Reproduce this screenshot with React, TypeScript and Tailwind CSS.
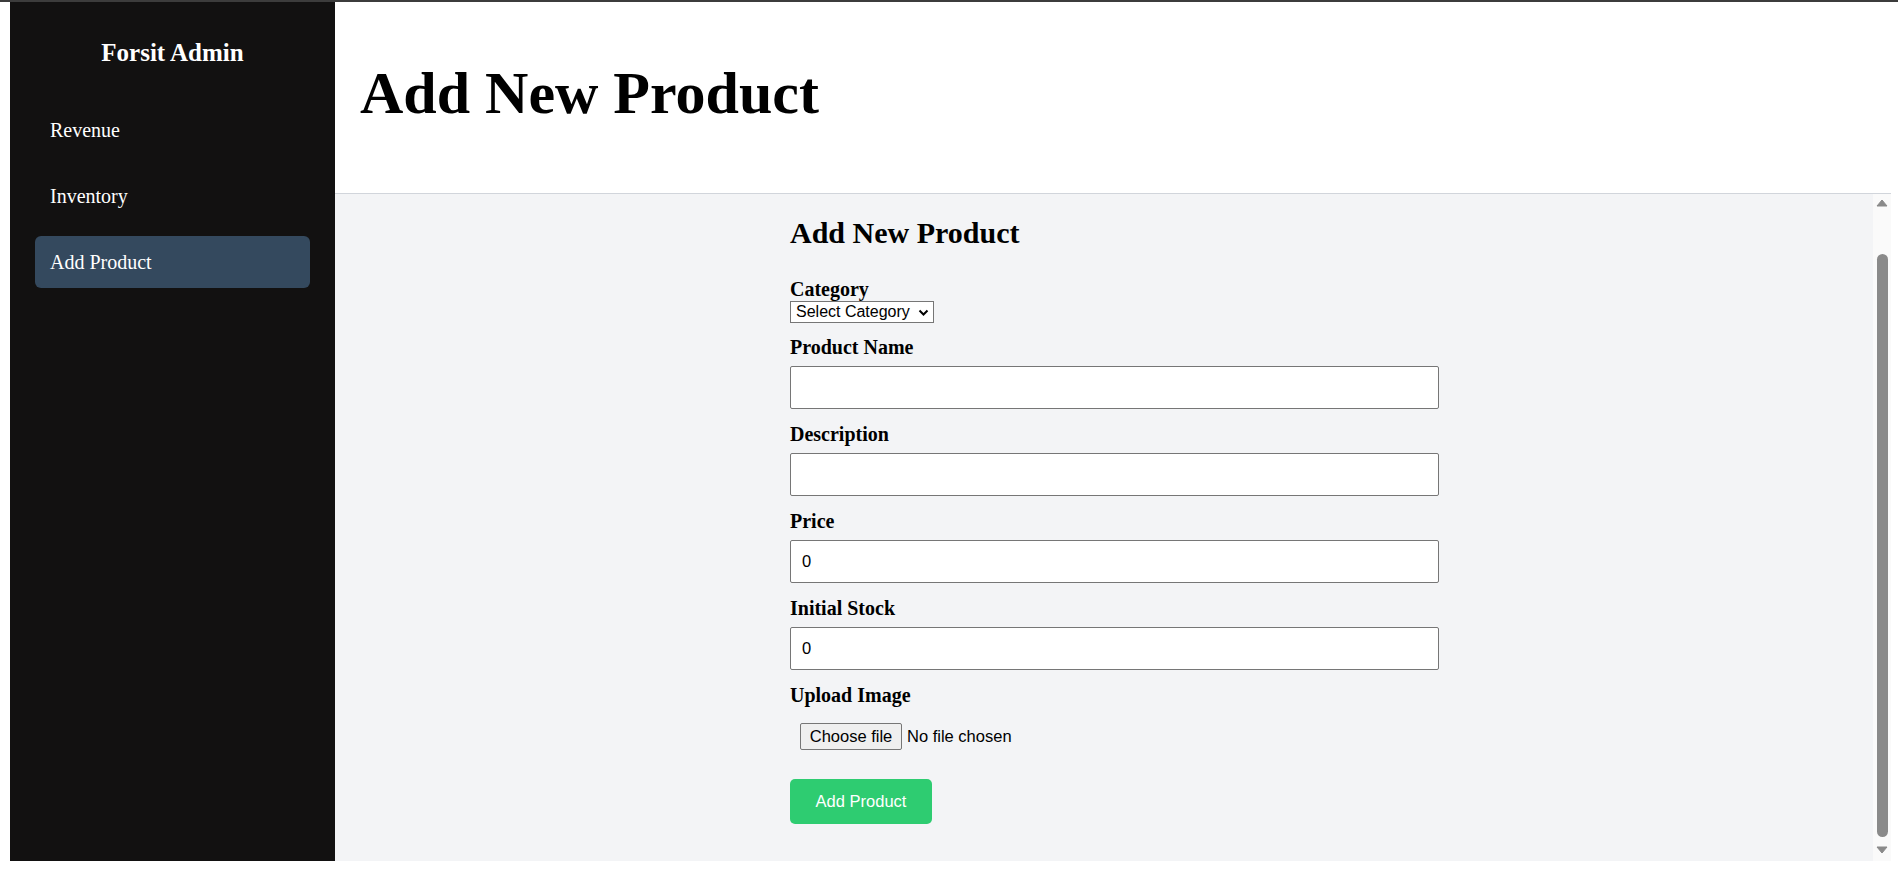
const navItems = ["Revenue", "Inventory", "Add Product"];

function Field({ label, value }: { label: string; value?: string }) {
  return (
    <div className="mb-[15px] flex flex-col">
      <label className="mb-[9px] text-[20px] font-bold leading-[20px]">{label}</label>
      <div className="flex h-[43px] w-[649px] items-center rounded-[2px] border border-[#767676] bg-white px-[11px] font-['Liberation_Sans',Arial,sans-serif] text-[16.5px] text-black">
        {value}
      </div>
    </div>
  );
}

function Scrollbar() {
  return (
    <div className="flex w-[18px] flex-col bg-[#fafafa]">
      <div className="flex h-[17px] items-center justify-center">
        <svg width="12" height="8" viewBox="0 0 12 8">
          <polygon points="6,1 11,7 1,7" fill="#8a8a8a" stroke="#8a8a8a" strokeLinejoin="round" />
        </svg>
      </div>
      <div className="flex flex-1 justify-center pt-[43px] pb-[7px]">
        <div className="h-full w-[11px] rounded-full bg-[#8a8a8a]" />
      </div>
      <div className="flex h-[17px] items-start justify-center pt-[2px]">
        <svg width="12" height="8" viewBox="0 0 12 8">
          <polygon points="1,1 11,1 6,7" fill="#8a8a8a" stroke="#8a8a8a" strokeLinejoin="round" />
        </svg>
      </div>
    </div>
  );
}

export default function App() {
  return (
    <div className="flex h-[871px] w-full border-t-2 border-[#3c3c3c] bg-white pr-[7px] pb-[10px] pl-[10px] font-['Liberation_Serif','Times_New_Roman',serif] text-black">
      <aside className="flex w-[325px] flex-col bg-[#121111] px-[25px] pt-[37px] text-white">
        <h2 className="h-[28px] text-center text-[25px] font-bold leading-[28px]">Forsit Admin</h2>
        <nav className="mt-[37px] flex flex-col gap-[14px]">
          {navItems.map((item) => (
            <div
              key={item}
              className={`flex h-[52px] items-center rounded-[6px] pl-[15px] text-[20px] ${
                item === "Add Product" ? "bg-[#34495e]" : ""
              }`}
            >
              {item}
            </div>
          ))}
        </nav>
      </aside>

      <main className="flex flex-1 flex-col">
        <header className="h-[192px] border-b border-[#d1d5db] bg-white pt-[60px] pl-[25px]">
          <h1 className="text-[60px] font-bold leading-[62px]">Add New Product</h1>
        </header>

        <div className="flex flex-1 overflow-hidden bg-[#f3f4f6]">
          <div className="flex-1 pt-[24px] pl-[455px]">
            <h2 className="text-[30px] font-bold leading-[30px]">Add New Product</h2>

            <div className="mt-[31px] flex flex-col">
              <label className="text-[20px] font-bold leading-[20px]">Category</label>
              <div className="relative mt-[2px] flex h-[22px] w-[144px] items-center border border-[#767676] bg-white pl-[5px] font-['Liberation_Sans',Arial,sans-serif] text-[16px]">
                Select Category
                <svg className="absolute right-[4px] top-[7px]" width="11" height="7" viewBox="0 0 11 7">
                  <path d="M1.5 1.5 L5.5 5.5 L9.5 1.5" fill="none" stroke="#000" strokeWidth="2" />
                </svg>
              </div>
            </div>

            <div className="mt-[14px]">
              <Field label="Product Name" />
              <Field label="Description" />
              <Field label="Price" value="0" />
              <Field label="Initial Stock" value="0" />
            </div>

            <label className="block text-[20px] font-bold leading-[20px]">Upload Image</label>
            <div className="mt-[18px] ml-[10px] flex items-center gap-[5px] font-['Liberation_Sans',Arial,sans-serif] text-[16.5px]">
              <span className="flex h-[27px] w-[102px] items-center justify-center rounded-[2px] border border-[#767676] bg-[#efefef]">
                Choose file
              </span>
              <span>No file chosen</span>
            </div>

            <button className="mt-[29px] h-[45px] w-[142px] rounded-[5px] bg-[#2ecc71] font-['Liberation_Sans',Arial,sans-serif] text-[16.5px] text-white">
              Add Product
            </button>
          </div>
          <Scrollbar />
        </div>
      </main>
    </div>
  );
}
